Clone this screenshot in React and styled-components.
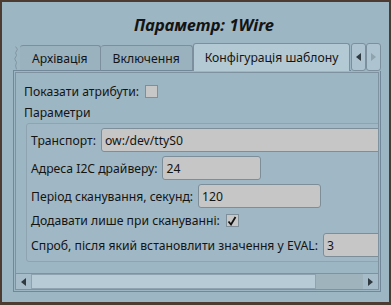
import styled, { createGlobalStyle } from 'styled-components'

const GlobalStyle = createGlobalStyle`
    body {
        margin: 0;
        font-family: "Noto Sans", "Open Sans", sans-serif;
        color: #141414;
    }
`

const rows = [
    { label: 'Транспорт:', value: 'ow:/dev/ttyS0', width: 300 },
    { label: 'Адреса I2C драйверу:', value: '24', width: 99 },
    { label: 'Період сканування, секунд:', value: '120', width: 123 },
    { label: 'Додавати лише при скануванні:', checked: true },
    { label: 'Спроб, після який встановлити значення у EVAL:', value: '3', width: 70 },
]

const Tear = () => (
    <TearBox>
        <svg width="8" height="26" viewBox="0 0 8 26">
            <path d="M3 0 L5 3 L3 7 L4 10 L2 14 L4 18 L3 22 L4 26" fill="none" stroke="#7b909c" strokeWidth="1" />
        </svg>
    </TearBox>
)

const Arrow = ({ dir, dim }) => (
    <svg width="5" height="8" viewBox="0 0 5 8">
        <path d={dir === 'left' ? 'M5 0 L0 4 L5 8 Z' : 'M0 0 L5 4 L0 8 Z'} fill={dim ? '#8fa3ae' : '#2e3a40'} />
    </svg>
)

const Check = () => (
    <svg width="10" height="10" viewBox="0 0 10 10">
        <path d="M1.5 5.5 L4 8.5 L8.5 1" fill="none" stroke="#111" strokeWidth="1.8" />
    </svg>
)

const App = () => {
    return (
        <Window>
            <GlobalStyle />
            <Title>Параметр: 1Wire</Title>
            <TabWidget>
                <TabBar>
                    <Tear />
                    <Tab>Архівація</Tab>
                    <Tab>Включення</Tab>
                    <Tab active>Конфігурація шаблону</Tab>
                    <Spacer />
                    <ScrollBtn><Arrow dir="left" /></ScrollBtn>
                    <ScrollBtn><Arrow dir="right" dim /></ScrollBtn>
                </TabBar>
                <Pane>
                    <Frame>
                        <Viewport>
                            <Line>
                                Показати атрибути:
                                <CheckBox />
                            </Line>
                            <Caption>Параметри</Caption>
                            <Group>
                                {rows.map(r => (
                                    <Row key={r.label} short={r.checked}>
                                        {r.label}
                                        {r.checked
                                            ? <CheckBox><Check /></CheckBox>
                                            : <Field style={{ width: r.width }}>{r.value}</Field>}
                                    </Row>
                                ))}
                            </Group>
                        </Viewport>
                        <HScroll>
                            <HBtn><Arrow dir="left" /></HBtn>
                            <Handle />
                            <Track />
                            <HBtn><Arrow dir="right" /></HBtn>
                        </HScroll>
                    </Frame>
                </Pane>
            </TabWidget>
        </Window>
    )
}

export default App

const Window = styled.div`
    width: 391px;
    height: 305px;
    box-sizing: border-box;
    border: 2px solid #4d3a30;
    border-bottom-width: 3px;
    background: #9db6c3;
    display: flex;
    flex-direction: column;
    overflow: hidden;
`

const Title = styled.div`
    height: 41px;
    display: flex;
    align-items: center;
    justify-content: center;
    font-size: 16.5px;
    font-weight: bold;
    font-style: italic;
    padding: 4px 0 0 17px;
    box-sizing: border-box;
`

const TabWidget = styled.div`
    flex: 1;
    margin: 0 8px 10px 11px;
    display: flex;
    flex-direction: column;
    min-height: 0;
`

const TabBar = styled.div`
    height: 28px;
    display: flex;
    align-items: flex-end;
    font-size: 12.2px;
`

const TearBox = styled.div`
    width: 7px;
    height: 26px;
    flex-shrink: 0;
    display: flex;
    border-bottom: 1px solid #71879a;
    box-sizing: border-box;
`

const Tab = styled.div`
    height: ${p => (p.active ? 28 : 26)}px;
    box-sizing: border-box;
    flex-shrink: 0;
    padding: 0 ${p => (p.active ? 11 : 12)}px;
    display: flex;
    align-items: center;
    border: 1px solid #7b909c;
    border-bottom: ${p => (p.active ? 'none' : '1px solid #71879a')};
    border-left-width: ${p => (p.active ? 1 : 0)}px;
    border-radius: 3px 3px 0 0;
    background: ${p => (p.active ? '#b3c9d4' : '#9ab1be')};
    white-space: nowrap;
`

const Spacer = styled.div`
    flex: 1;
    height: 1px;
    background: #71879a;
`

const ScrollBtn = styled.div`
    width: 15px;
    height: 28px;
    flex-shrink: 0;
    box-sizing: border-box;
    border: 1px solid #7b909c;
    border-radius: 3px;
    background: #adc3cf;
    display: flex;
    align-items: center;
    justify-content: center;
`

const Pane = styled.div`
    flex: 1;
    border: 1px solid #71879a;
    border-top: none;
    padding: 1px;
    display: flex;
    min-height: 0;
`

const Frame = styled.div`
    flex: 1;
    border: 1px solid #7e939f;
    display: flex;
    flex-direction: column;
    overflow: hidden;
`

const Viewport = styled.div`
    flex: 1;
    overflow: hidden;
    padding: 9px 0 0 8px;
    font-size: 12.2px;
`

const Line = styled.div`
    height: 18px;
    display: flex;
    align-items: center;
    gap: 6px;
    white-space: nowrap;
`

const Caption = styled.div`
    height: 18px;
    margin-top: 3px;
    display: flex;
    align-items: center;
`

const CheckBox = styled.div`
    width: 13px;
    height: 13px;
    box-sizing: border-box;
    border: 1px solid #7f8f99;
    background: #c7c7c7;
    display: flex;
    align-items: center;
    justify-content: center;
`

const Group = styled.div`
    width: 420px;
    margin: 2px 0 0 2px;
    padding: 4px 0 4px 4px;
    border: 1px solid #8ea5b1;
    border-radius: 3px;
    background: #a0b8c5;
    display: flex;
    flex-direction: column;
    gap: 4px;
`

const Row = styled.div`
    height: ${p => (p.short ? 17 : 24)}px;
    display: flex;
    align-items: center;
    gap: ${p => (p.short ? 6 : 5)}px;
    white-space: nowrap;
`

const Field = styled.div`
    height: 24px;
    box-sizing: border-box;
    border: 1px solid #7d8e98;
    border-radius: 3px;
    background: #c6c6c6;
    padding: 0 3px;
    display: flex;
    align-items: center;
    flex-shrink: 0;
`

const HScroll = styled.div`
    height: 15px;
    display: flex;
    border-top: 1px solid #7e939f;
`

const HBtn = styled.div`
    width: 15px;
    background: #a6bcc8;
    display: flex;
    align-items: center;
    justify-content: center;
`

const Handle = styled.div`
    width: 285px;
    background: #b6cbd6;
    border: 1px solid #8ea3af;
    box-sizing: border-box;
`

const Track = styled.div`
    flex: 1;
    background: #9fb3bd;
`
